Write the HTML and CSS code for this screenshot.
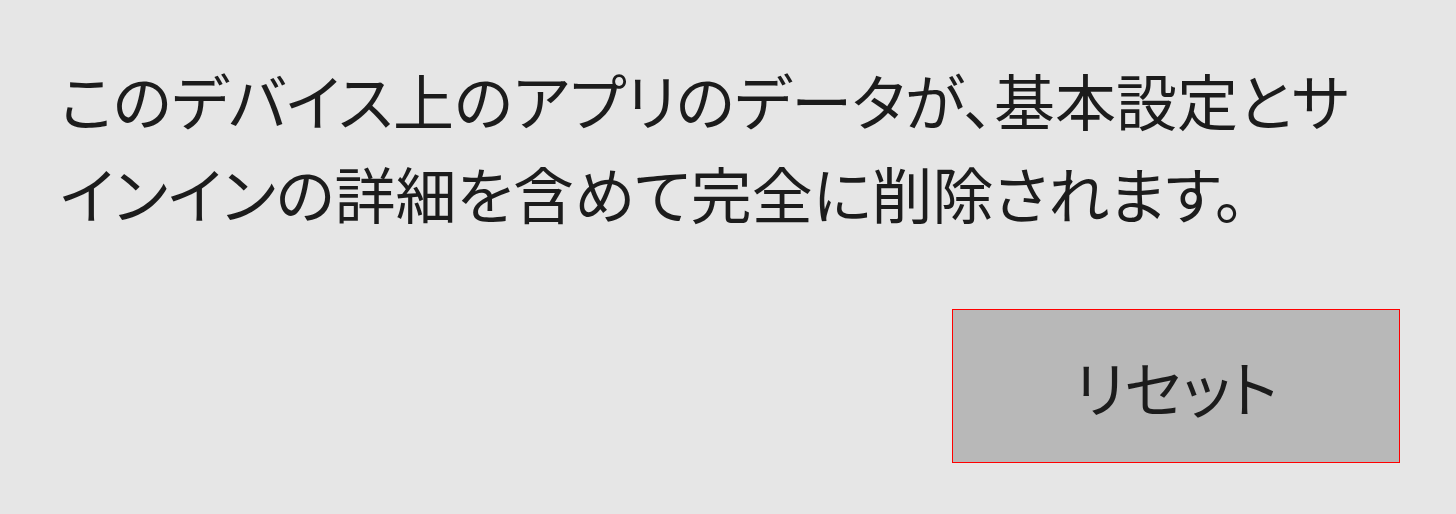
FILE: index.html
```html
<!DOCTYPE html>
<html lang="ja">
<head>
<meta charset="utf-8">
<link rel="stylesheet" href="styles.css">
</head>
<body>
<div class="panel">
  <p class="message">このデバイス上のアプリのデータが、基本設定とサインインの詳細を含めて完全に削除されます。</p>
  <div class="actions">
    <button class="reset-btn" type="button">リセット</button>
  </div>
</div>
</body>
</html>
```

FILE: styles.css
```css
html, body {
  margin: 0;
  padding: 0;
  background: #e6e6e6;
}
body {
  width: 1456px;
  height: 514px;
  overflow: hidden;
  font-family: "Noto Sans CJK JP", "Noto Sans", sans-serif;
  font-feature-settings: "palt";
  color: #1c1c1c;
}
.panel {
  display: flex;
  flex-direction: column;
  padding: 53px 56px 0 60px;
}
.message {
  margin: 0;
  width: 1300px;
  font-size: 61px;
  line-height: 93px;
  font-weight: 400;
}
.actions {
  display: flex;
  justify-content: flex-end;
  margin-top: 70px;
}
.reset-btn {
  width: 448px;
  height: 154px;
  box-sizing: border-box;
  border: 1px solid #ff0000;
  border-radius: 0;
  background: #b8b8b8;
  font-family: inherit;
  font-feature-settings: "palt";
  font-size: 61px;
  color: #1c1c1c;
  padding: 0;
}
```
